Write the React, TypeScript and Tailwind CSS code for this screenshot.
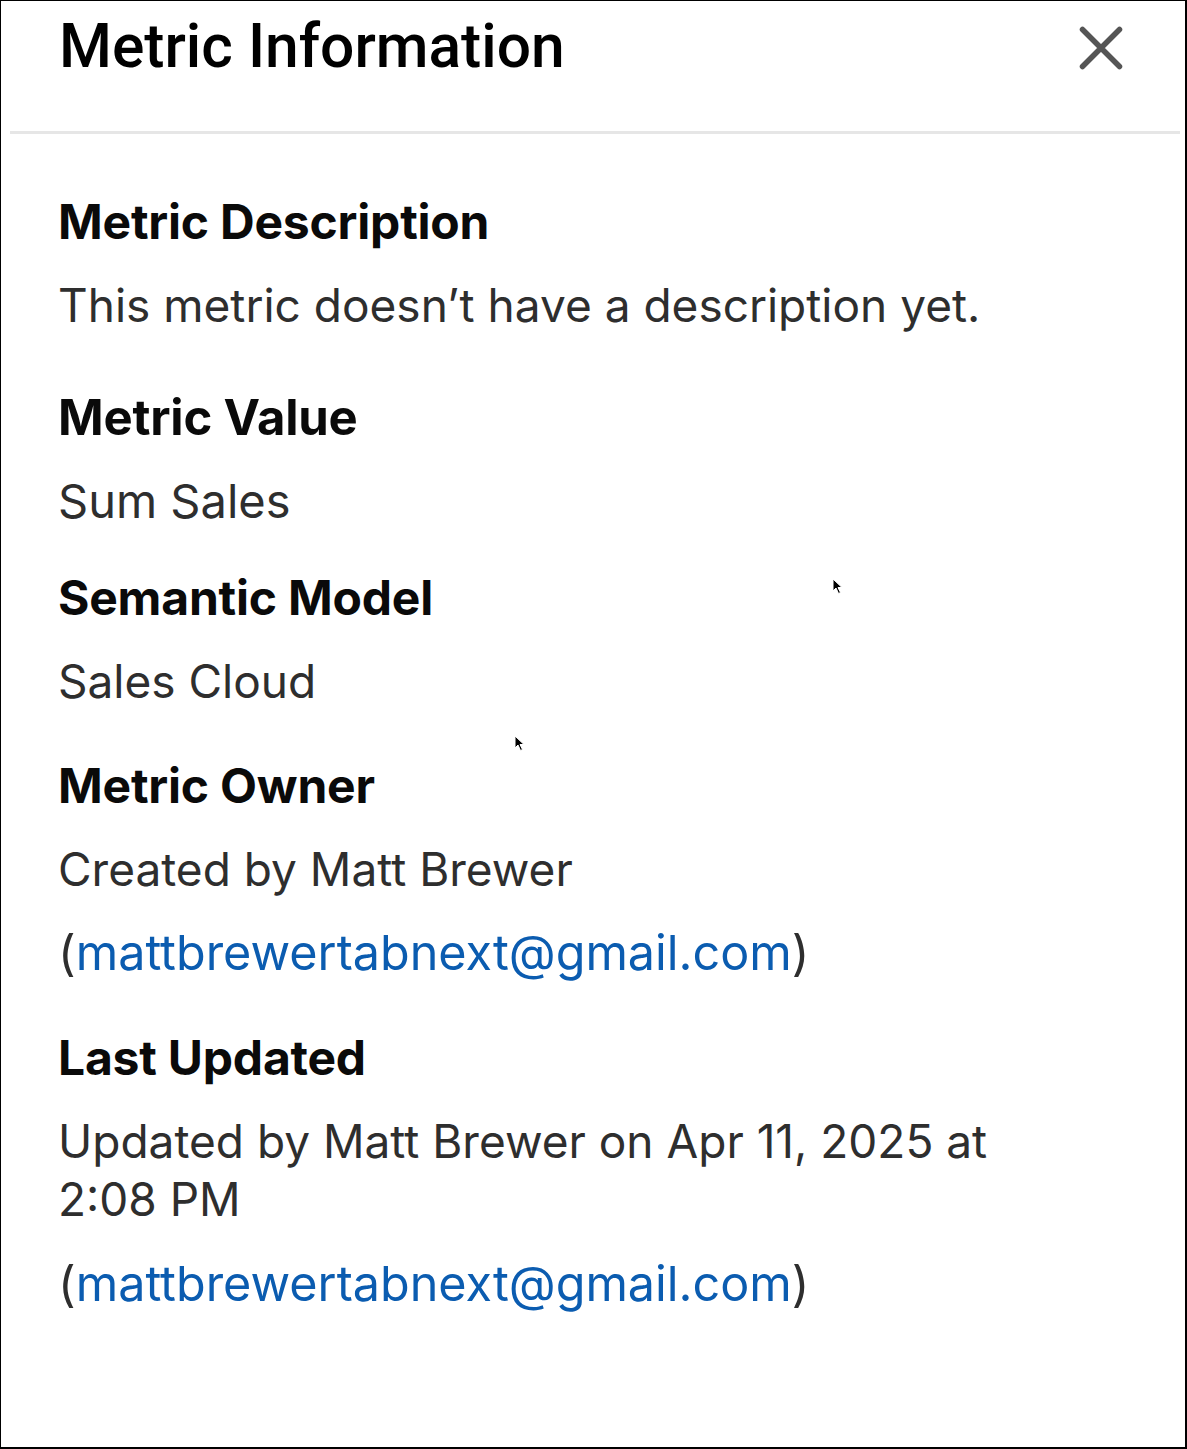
const EMAIL = "mattbrewertabnext@gmail.com";

function Cursor({ className }: { className: string }) {
  return (
    <svg className={"absolute " + className} width="12" height="17" viewBox="0 0 12 17">
      <path d="M1 1 L1 13 L4 10 L6.5 15.5 L8.5 14.5 L6 9.5 L10 9.5 Z" fill="#000" stroke="#fff" strokeWidth="1" />
    </svg>
  );
}

function Heading({ children, size = "text-[48px]" }: { children: React.ReactNode; size?: string }) {
  return (
    <h3 className={size + " font-bold leading-[56px] tracking-[-0.2px] text-[#0a0a0a]"}>{children}</h3>
  );
}

function Body({ children, size = "text-[46px]" }: { children: React.ReactNode; size?: string }) {
  return <p className={size + " leading-[58px] text-[#2e2e2e]"}>{children}</p>;
}

function Email() {
  return (
    <p className="text-[48.5px] leading-[58px] text-[#2e2e2e]">
      (<a className="text-[#0b5cb0]">{EMAIL}</a>)
    </p>
  );
}

export default function App() {
  return (
    <div
      className="relative h-[1449px] w-[1187px] overflow-hidden border-t border-l border-r-2 border-b-2 border-black bg-white"
      style={{ fontFamily: "Inter, 'Noto Sans', sans-serif" }}
    >
      <header className="flex items-start justify-between pl-[58px] pr-[62px]">
        <h2
          className="mt-[10px] text-[60.5px] font-medium leading-[72px] text-black"
          style={{ fontFamily: "Roboto, 'Liberation Sans', sans-serif" }}
        >
          Metric Information
        </h2>
        <button className="mt-[25px] text-[#555]" aria-label="Close">
          <svg width="44" height="44" viewBox="0 0 44 44" fill="none" stroke="currentColor" strokeWidth="5.5" strokeLinecap="round">
            <path d="M3.5 3.5 L40.5 40.5 M40.5 3.5 L3.5 40.5" />
          </svg>
        </button>
      </header>

      <div className="ml-[9px] mr-[5px] mt-[48px] h-[3px] bg-[#e6e6e6]" />

      <div className="px-[57px] pt-[60px]">
        <Heading>Metric Description</Heading>
        <div className="mt-[26px]">
          <Body>This metric doesn’t have a description yet.</Body>
        </div>

        <div className="mt-[56px]">
          <Heading size="text-[49px]">Metric Value</Heading>
        </div>
        <div className="mt-[26px]">
          <Body size="text-[47px]">Sum Sales</Body>
        </div>

        <div className="mt-[40px]">
          <Heading>Semantic Model</Heading>
        </div>
        <div className="mt-[26px]">
          <Body>Sales Cloud</Body>
        </div>

        <div className="mt-[48px]">
          <Heading>Metric Owner</Heading>
        </div>
        <div className="mt-[26px]">
          <Body>Created by Matt Brewer</Body>
        </div>
        <div className="mt-[26px]">
          <Email />
        </div>

        <div className="mt-[48px]">
          <Heading>Last Updated</Heading>
        </div>
        <div className="mt-[26px]">
          <Body>
            Updated by Matt Brewer on Apr 11, 2025 at
            <br />
            2:08 PM
          </Body>
        </div>
        <div className="mt-[27px]">
          <Email />
        </div>
      </div>

      <Cursor className="left-[831px] top-[577px]" />
      <Cursor className="left-[513px] top-[734px]" />
    </div>
  );
}
